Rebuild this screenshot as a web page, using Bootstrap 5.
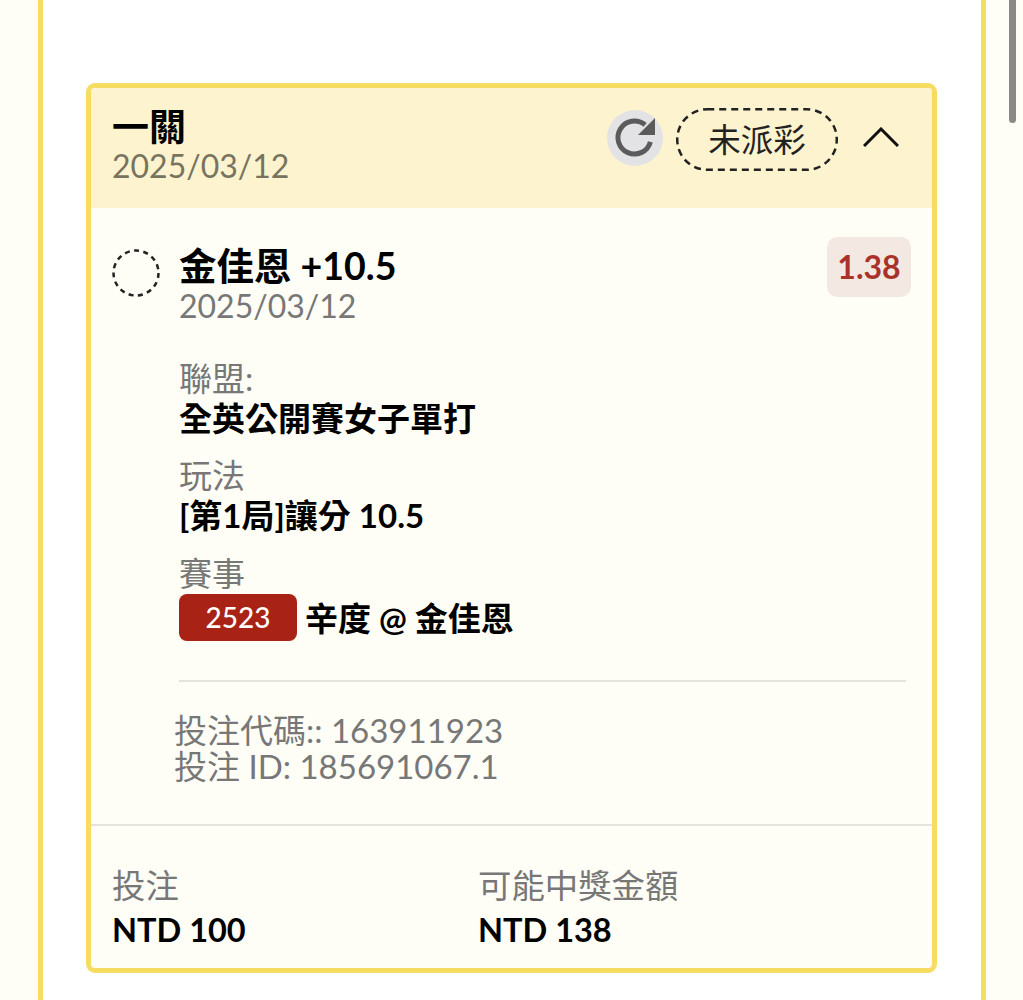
<!DOCTYPE html>
<html lang="zh-Hant">
<head>
  <meta charset="UTF-8" />
  <meta name="viewport" content="width=device-width, initial-scale=1.0"/>
  <title>投注</title>
  <link href="https://cdn.jsdelivr.net/npm/bootstrap@5.3.0/dist/css/bootstrap.min.css" rel="stylesheet" />
  <style>
    html, body { height: 1000px; overflow: hidden; }
    body {
      background-color: #fefef6;
      color: #000;
      font-family: Lato, "Noto Sans CJK TC", sans-serif;
      font-size: 33px;
      line-height: 36px;
    }
    .scroll-thumb {
      position: absolute; left: 1009px; top: 0;
      width: 7px; height: 123px;
      background: #8a8a86; border-radius: 0 0 4px 4px;
    }
    .shell {
      width: 948px; height: 1000px; margin-left: 38px;
      padding: 83px 44px 0 43px;
      background: #fff;
      border-left: 5px solid #f7dc62;
      border-right: 5px solid #f7dc62;
    }
    .bet-card {
      height: 890px;
      background: #fefef6;
      border: 5px solid #f7dc62;
      border-radius: 9px;
      overflow: hidden;
    }
    .bet-head {
      height: 120px;
      padding: 17px 21px 0;
      background: #fdf3cf;
    }
    .bet-title { font-size: 37px; line-height: 43px; font-weight: 700; }
    .muted-text { color: #777; }
    .head-date { color: #77735f; font-size: 32px; }
    .refresh-btn {
      width: 56px; height: 56px; margin-top: 5px;
      background: #e3e3e6;
    }
    .status-pill {
      width: 162px; height: 63px; margin: 3px 0 0 13px;
      font-size: 32.5px; color: #222;
    }
    .pill-outline { position: absolute; left: 0; top: 0; }
    .chevron { margin: 22px 12px 0 25px; }
    .bet-main { height: 616px; padding: 29px 21px 0; }
    .pick-ring { margin-top: 12px; }
    .pick-text { margin: 7px 0 0 19px; }
    .pick-name { font-size: 37.5px; line-height: 43px; font-weight: 700; }
    .pick-date { line-height: 38px; font-size: 32px; }
    .odds-tag {
      width: 84px; height: 60px;
      background: #f3e9e2; color: #a9332a;
      border-radius: 10px;
      font-weight: 700; font-size: 32px;
    }
    .info-list { margin: 33px 0 0 67px; }
    .info-label { line-height: 40px; color: #777; }
    .info-value { font-size: 33px; line-height: 40px; font-weight: 700; }
    .gap-play { margin-top: 17px; }
    .gap-game { margin-top: 18px; }
    .game-row { margin-top: 1px; }
    .game-tag {
      width: 118px; height: 47px;
      background: #a92216; color: #fff;
      border-radius: 8px;
      font-size: 28px; line-height: 47px; font-weight: 500;
    }
    .rule-line { height: 2px; margin: 39px 5px 0 67px; background: #e4e3dd; }
    .ticket-ids { margin: 30px 0 0 62px; }
    .bet-foot { border-top: 2px solid #e4e3dd; padding: 38px 21px 0; }
    .foot-col { width: 366px; }
    .foot-label { font-size: 33.4px; line-height: 42px; color: #777; }
    .foot-value { font-size: 32.5px; line-height: 48px; font-weight: 700; }
  </style>
</head>
<body>
  <div class="scroll-thumb"></div>
  <div class="shell">
    <div class="bet-card">
      <div class="bet-head d-flex align-items-start">
        <div class="flex-grow-1">
          <div class="bet-title">一關</div>
          <div class="head-date">2025/03/12</div>
        </div>
        <div class="refresh-btn rounded-circle">
          <svg class="d-block" width="56" height="56" viewBox="0 0 56 56">
            <path d="M43.4 31.8A16.5 16.5 0 1 1 38.1 14.9" fill="none" stroke="#5b5b5b" stroke-width="5"/>
            <path d="M48 8V25H31z" fill="#5b5b5b"/>
          </svg>
        </div>
        <div class="status-pill position-relative d-flex align-items-center justify-content-center">
          <svg class="pill-outline" width="162" height="63" viewBox="0 0 162 63">
            <rect x="1.25" y="1.25" width="159.5" height="60.5" rx="30" fill="none" stroke="#222" stroke-width="2.5" stroke-dasharray="7 5"/>
          </svg>
          未派彩
        </div>
        <svg class="chevron" width="36" height="20" viewBox="0 0 36 20">
          <path d="M1 19L18 2l17 17" fill="none" stroke="#111" stroke-width="3"/>
        </svg>
      </div>

      <div class="bet-main">
        <div class="d-flex align-items-start">
          <svg class="pick-ring" width="48" height="48" viewBox="0 0 48 48">
            <circle cx="24" cy="24" r="22.5" fill="none" stroke="#222" stroke-width="2.5" stroke-dasharray="5 4.4"/>
          </svg>
          <div class="pick-text flex-grow-1">
            <div class="pick-name">金佳恩 +10.5</div>
            <div class="pick-date muted-text">2025/03/12</div>
          </div>
          <div class="odds-tag d-flex align-items-center justify-content-center">1.38</div>
        </div>

        <div class="info-list">
          <div class="info-label">聯盟:</div>
          <div class="info-value">全英公開賽女子單打</div>
          <div class="info-label gap-play">玩法</div>
          <div class="info-value">[第1局]讓分 10.5</div>
          <div class="info-label gap-game">賽事</div>
          <div class="game-row d-flex align-items-center gap-2">
            <div class="game-tag text-center">2523</div>
            <div class="info-value">辛度 @ 金佳恩</div>
          </div>
        </div>

        <div class="rule-line"></div>
        <div class="ticket-ids muted-text">
          <div>投注代碼:: 163911923</div>
          <div>投注 ID: 185691067.1</div>
        </div>
      </div>

      <div class="bet-foot d-flex">
        <div class="foot-col">
          <div class="foot-label">投注</div>
          <div class="foot-value">NTD 100</div>
        </div>
        <div class="foot-col">
          <div class="foot-label">可能中獎金額</div>
          <div class="foot-value">NTD 138</div>
        </div>
      </div>
    </div>
  </div>
  <script src="https://cdn.jsdelivr.net/npm/bootstrap@5.3.0/dist/js/bootstrap.bundle.min.js"></script>
</body>
</html>
